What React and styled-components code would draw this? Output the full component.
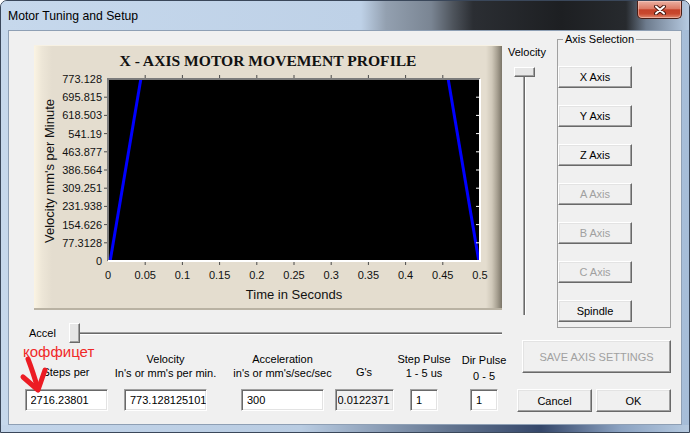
import React from "react"
import styled, { createGlobalStyle } from "styled-components"

const GlobalStyle = createGlobalStyle`
html, body {
  margin:0;
  padding:0;
  background:#fff;
}
body {
  font-family:"Liberation Sans", Arial, sans-serif;
}
`

const Y_LABELS = ["773.128", "695.815", "618.503", "541.19", "463.877", "386.564", "309.251", "231.938", "154.626", "77.3128", "0"]
const X_LABELS = ["0", "0.05", "0.1", "0.15", "0.2", "0.25", "0.3", "0.35", "0.4", "0.45", "0.5"]

const AXES = [
  { name: "X Axis" },
  { name: "Y Axis" },
  { name: "Z Axis" },
  { name: "A Axis", off: true },
  { name: "B Axis", off: true },
  { name: "C Axis", off: true },
  { name: "Spindle" },
]

const FIELDS = [
  { lines: ["Steps per"], value: "2716.23801", col: 80, w: 83, mb: 10 },
  { lines: ["Velocity", "In's or mm's per min."], value: "773.128125101", col: 119, w: 83, mb: 9 },
  { lines: ["Acceleration", "in's or mm's/sec/sec"], value: "300", col: 115, w: 83, mb: 9 },
  { lines: ["G's"], value: "0.0122371", col: 48, w: 59, mb: 10, grey: true, pad: 2 },
  { lines: ["Step Pulse", "1 - 5 us"], value: "1", col: 72, w: 28, mb: 9 },
  { lines: ["Dir Pulse", "0 - 5"], value: "1", col: 48, w: 28, mb: 5, lh: 16 },
]

const PLOT_X = 74
const PLOT_W = 372
const PLOT_H = 182

const ProfileChart = () => {
  const xs = X_LABELS.map((_, i) => PLOT_X + (i * PLOT_W) / 10)
  const ys = Y_LABELS.map((_, i) => (i * PLOT_H) / 10)
  return (
    <ChartSvg width="468" height="231" viewBox="0 0 468 231">
      <defs>
        <clipPath id="plotClip">
          <rect x={PLOT_X} y="0" width={PLOT_W} height={PLOT_H} />
        </clipPath>
      </defs>
      <rect x={PLOT_X} y="0" width={PLOT_W} height={PLOT_H} fill="#000" />
      <g clipPath="url(#plotClip)" stroke="#0000ff" strokeWidth="3" fill="none">
        <line x1="76" y1="183" x2="107" y2="-1" />
        <line x1="414" y1="-1" x2="445" y2="183" />
      </g>
      <line x1={PLOT_X - 1} y1="0" x2={PLOT_X + PLOT_W} y2="0" stroke="#7c7c7c" strokeWidth="2" />
      <line x1={PLOT_X} y1="0" x2={PLOT_X} y2={PLOT_H} stroke="#7c7c7c" strokeWidth="2" />
      <line x1={PLOT_X} y1={PLOT_H} x2={PLOT_X + PLOT_W + 1} y2={PLOT_H} stroke="#fff" strokeWidth="2" />
      <line x1={PLOT_X + PLOT_W} y1="0" x2={PLOT_X + PLOT_W} y2={PLOT_H} stroke="#fff" strokeWidth="2" />
      {xs.slice(1, 10).map((x) => (
        <g key={x} stroke="#4a4a4a" strokeWidth="1">
          <line x1={x} y1="-4" x2={x} y2="-1" />
          <line x1={x} y1={PLOT_H + 1} x2={x} y2={PLOT_H + 4} />
        </g>
      ))}
      {ys.slice(1, 10).map((y) => (
        <g key={y} strokeWidth="1">
          <line x1={PLOT_X - 4} y1={y} x2={PLOT_X - 1} y2={y} stroke="#4a4a4a" />
          <line x1={PLOT_X + PLOT_W - 4} y1={y} x2={PLOT_X + PLOT_W} y2={y} stroke="#fff" />
        </g>
      ))}
      <g fontFamily="'Liberation Sans', Arial, sans-serif" fontSize="11" fill="#111">
        {Y_LABELS.map((t, i) => (
          <text key={t} x="68" y={ys[i] + 4} textAnchor="end">{t}</text>
        ))}
        {X_LABELS.map((t, i) => (
          <text key={t} x={xs[i]} y="200" textAnchor="middle">{t}</text>
        ))}
      </g>
      <g fontFamily="'Liberation Sans', Arial, sans-serif" fontSize="13" fill="#111">
        <text x={PLOT_X + PLOT_W / 2} y="220" textAnchor="middle">Time in Seconds</text>
        <text transform="translate(20 92) rotate(-90)" textAnchor="middle">Velocity mm's per Minute</text>
      </g>
    </ChartSvg>
  )
}

const CloseGlyph = () => (
  <svg width="12" height="10" viewBox="0 0 12 10">
    <path d="M2 1.5 L10 8.5 M10 1.5 L2 8.5" stroke="#4a1a12" strokeWidth="4" strokeLinecap="round" />
    <path d="M2 1.5 L10 8.5 M10 1.5 L2 8.5" stroke="#fff" strokeWidth="2" strokeLinecap="round" />
  </svg>
)

const App = () => {
  return (
    <>
      <GlobalStyle />
      <Window>
        <TitleBar>
          <Caption>Motor Tuning and Setup</Caption>
          <CloseButton><CloseGlyph /></CloseButton>
        </TitleBar>
        <Frame>
          <Client>
            <ChartPanel>
              <ChartTitle>X - AXIS MOTOR MOVEMENT PROFILE</ChartTitle>
              <ProfileChart />
            </ChartPanel>

            <VelocityColumn>
              <Label>Velocity</Label>
              <VThumb />
              <VTrack />
            </VelocityColumn>

            <Group>
              <Legend>Axis Selection</Legend>
              {AXES.map((a) => (
                <WinButton key={a.name} $w={74} $h={22} disabled={a.off}>{a.name}</WinButton>
              ))}
            </Group>

            <Lower>
              <AccelRow>
                <AccelLabel>Accel</AccelLabel>
                <HThumb />
                <HTrack />
              </AccelRow>
              <Fields>
                <Note>коффицет</Note>
                <Arrow width="40" height="42" viewBox="0 0 40 42">
                  <g stroke="#ec1c24" strokeWidth="5" strokeLinecap="round" strokeLinejoin="round" fill="none">
                    <path d="M10 6 Q15 19 20 36" />
                    <path d="M5 24 L20 37 L27 17" />
                  </g>
                </Arrow>
                {FIELDS.map((f) => (
                  <Field key={f.lines[0]} $col={f.col}>
                    <FieldLabel $mb={f.mb} $lh={f.lh || 14}>
                      {f.lines.map((l) => <div key={l}>{l}</div>)}
                    </FieldLabel>
                    <TextBox readOnly value={f.value} $w={f.w} $grey={f.grey} $pad={f.pad} />
                  </Field>
                ))}
              </Fields>
            </Lower>

            <SaveSlot>
              <WinButton $w={149} $h={33} disabled>SAVE AXIS SETTINGS</WinButton>
            </SaveSlot>

            <DialogButtons>
              <WinButton $w={75} $h={23}>Cancel</WinButton>
              <WinButton $w={75} $h={23}>OK</WinButton>
            </DialogButtons>
          </Client>
        </Frame>
      </Window>
    </>
  )
}

export default App


const Window=styled.div`
width:690px;
height:433px;
box-sizing:border-box;
border:1px solid #3a475a;
border-radius:7px 7px 0 0;
overflow:hidden;
display:flex;
flex-direction:column;
background:#bfd1e6;
`

const TitleBar=styled.div`
height:29px;
display:flex;
align-items:center;
justify-content:space-between;
background:linear-gradient(90deg, #c6d8ec 0px, #bed1e7 360px, #93a0b0 385px, #7a8593 430px, #4e545c 452px, #2b2e33 472px, #1d1f22 560px, #272a2e 625px, #6d7b8d 645px, #b7cbe2 688px);
`

const Caption=styled.div`
margin-left:7px;
font-size:12.2px;
color:#000;
`

const CloseButton=styled.div`
align-self:flex-start;
margin-right:7px;
width:45px;
height:18px;
box-sizing:border-box;
display:flex;
align-items:center;
justify-content:center;
border:1px solid #4a1e16;
border-top:none;
border-radius:0 0 5px 5px;
background:linear-gradient(#eab0a2 0%, #dc7b66 45%, #c4422a 52%, #c8482e 75%, #e08a70 100%);
box-shadow:inset 0 0 0 1px rgba(255,220,210,0.45);
`

const Frame=styled.div`
flex:1;
padding:0 7px 7px 7px;
background:
  linear-gradient(90deg, #c3d5ea 0, #b9cce2 300px, #62748f 450px, #35476a 540px, #8ca3c2 620px, #b5c9df 688px) bottom / 100% 7px no-repeat,
  linear-gradient(90deg, #c6d8ec 0, #bccfe5 60%, #a6bdd8 100%);
`

const Client=styled.div`
box-sizing:border-box;
width:674px;
height:395px;
background:#f0f0f0;
border:1px solid #8e9fb4;
display:grid;
grid-template-columns:496px 47px 129px;
grid-template-rows:287px 22px 42px 42px;
grid-template-areas:
  "chart vel group"
  "lower . group"
  "lower save save"
  "lower btns btns";
font-size:11px;
color:#000;
`

const ChartPanel=styled.div`
grid-area:chart;
align-self:start;
margin:14px 0 0 25px;
width:468px;
height:265px;
box-sizing:border-box;
background:linear-gradient(90deg, #fbf4e3 0, #ede6d7 8px, #e4ddcf 18px, #e4ddcf 452px, #cfc8b9 458px, #a9a293 463px, #7b7568 468px);
box-shadow:inset 0 1px 0 #f7f1e3, inset 0 -2px 0 #b9b2a3;
`

const ChartTitle=styled.div`
box-sizing:border-box;
height:34px;
padding-top:7px;
line-height:18px;
text-align:center;
font-family:"Liberation Serif", "Times New Roman", serif;
font-weight:bold;
font-size:15.6px;
color:#111;
`

const ChartSvg=styled.svg`
display:block;
overflow:visible;
`

const VelocityColumn=styled.div`
grid-area:vel;
display:flex;
flex-direction:column;
padding-top:15px;
`

const Label=styled.div`
line-height:13px;
padding-left:3px;
white-space:nowrap;
`

const VThumb=styled.div`
margin:8px 0 0 9px;
width:21px;
height:10px;
box-sizing:border-box;
background:#e6e6e6;
border:1px solid;
border-color:#fff #696969 #696969 #fff;
box-shadow:inset -1px -1px 0 #a0a0a0;
`

const VTrack=styled.div`
margin-left:18px;
width:3px;
height:238px;
box-sizing:border-box;
border-left:1px solid #a0a0a0;
border-right:1px solid #fff;
background:#696969;
`

const Group=styled.fieldset`
grid-area:group;
align-self:start;
margin:2px 0 0 5px;
width:114px;
box-sizing:border-box;
padding:20px 0 5px 0;
border:1px solid #a0a0a0;
display:flex;
flex-direction:column;
gap:17px;
`

const Legend=styled.legend`
margin-left:5px;
padding:0 2px;
line-height:13px;
font-size:11px;
`

const WinButton=styled.button`
box-sizing:border-box;
width:${p => p.$w}px;
height:${p => p.$h}px;
margin:0;
padding:0;
font-family:"Liberation Sans", Arial, sans-serif;
font-size:11px;
color:${p => (p.disabled ? "#a0a0a0" : "#000")};
background:#f0f0f0;
border:1px solid;
border-color:#fff #696969 #696969 #fff;
box-shadow:inset -1px -1px 0 #a0a0a0, inset 1px 1px 0 #e3e3e3;
`

const Lower=styled.div`
grid-area:lower;
display:flex;
flex-direction:column;
`

const AccelRow=styled.div`
margin-top:5px;
height:20px;
display:flex;
align-items:center;
padding-left:20px;
padding-right:3px;
`

const AccelLabel=styled.div`
width:40px;
`

const HThumb=styled.div`
width:11px;
height:20px;
box-sizing:border-box;
background:#e6e6e6;
border:1px solid;
border-color:#fff #696969 #696969 #fff;
box-shadow:inset -1px -1px 0 #a0a0a0;
`

const HTrack=styled.div`
flex:1;
height:3px;
box-sizing:border-box;
border-top:1px solid #a0a0a0;
border-bottom:1px solid #fff;
background:#696969;
`

const Fields=styled.div`
flex:1;
position:relative;
display:flex;
align-items:flex-end;
padding:0 0 13px 17px;
`

const Note=styled.span`
position:absolute;
left:14px;
top:1px;
font-size:15px;
line-height:16px;
color:#f02828;
`

const Arrow=styled.svg`
position:absolute;
left:9px;
top:10px;
`

const Field=styled.div`
flex:none;
width:${p => p.$col}px;
display:flex;
flex-direction:column;
align-items:center;
`

const FieldLabel=styled.div`
margin-bottom:${p => p.$mb}px;
line-height:${p => p.$lh}px;
text-align:center;
white-space:nowrap;
`

const TextBox=styled.input`
flex:none;
box-sizing:border-box;
width:${p => p.$w}px;
height:22px;
margin:0;
padding:0 0 0 ${p => (p.$pad != null ? p.$pad : 5)}px;
font-family:"Liberation Sans", Arial, sans-serif;
font-size:11px;
color:#000;
background:${p => (p.$grey ? "#f0f0f0" : "#fff")};
border:1px solid;
border-color:#a0a0a0 #fff #fff #a0a0a0;
box-shadow:inset 1px 1px 0 #696969, inset -1px -1px 0 #e3e3e3;
outline:none;
`

const SaveSlot=styled.div`
grid-area:save;
display:flex;
justify-content:flex-end;
align-items:flex-start;
padding-right:10px;
`

const DialogButtons=styled.div`
grid-area:btns;
display:flex;
justify-content:flex-end;
align-items:flex-start;
gap:4px;
padding:7px 10px 0 0;
`
